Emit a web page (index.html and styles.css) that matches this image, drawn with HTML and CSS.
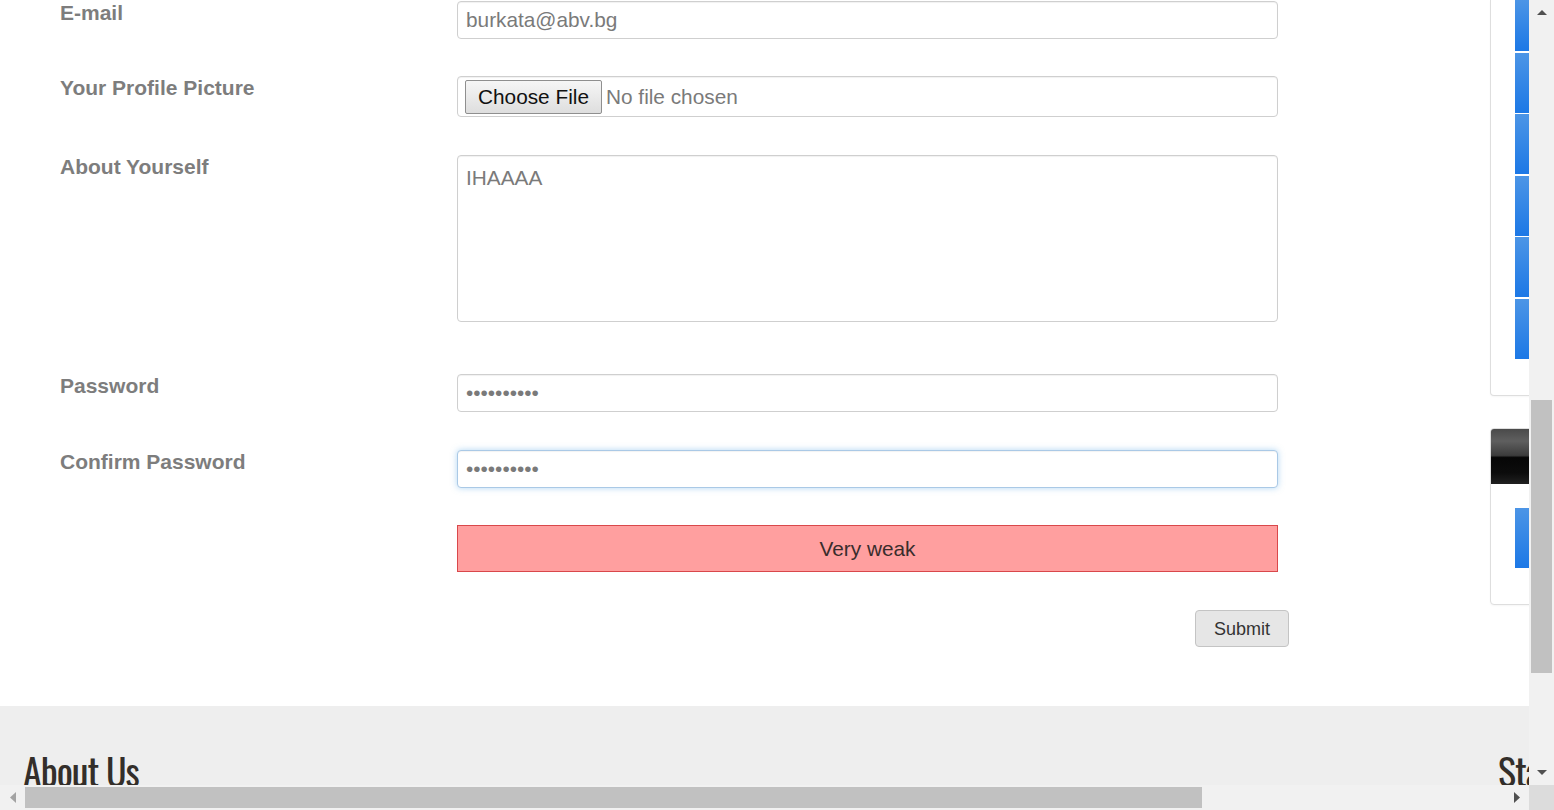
FILE: index.html
```html
<!DOCTYPE html>
<html lang="en">
<head>
<meta charset="utf-8">
<title>Profile</title>
<link rel="stylesheet" href="styles.css">
</head>
<body>
<div class="screen">
  <div class="viewport">
    <div class="page">
      <div class="main">
        <div class="content">
          <form class="form">
            <div class="row">
              <label class="label" for="email">E-mail</label>
              <input class="control" id="email" type="email" value="burkata@abv.bg">
            </div>
            <div class="row mb38">
              <label class="label" for="pic">Your Profile Picture</label>
              <input class="control file" id="pic" type="file">
            </div>
            <div class="row mb52">
              <label class="label" for="about">About Yourself</label>
              <textarea class="control area" id="about">IHAAAA</textarea>
            </div>
            <div class="row mb38">
              <label class="label" for="pass">Password</label>
              <input class="control" id="pass" type="password" value="abcdefghij">
            </div>
            <div class="row">
              <label class="label" for="pass2">Confirm Password</label>
              <input class="control focused" id="pass2" type="password" value="abcdefghij">
            </div>
            <div class="row mb38">
              <span></span>
              <div class="strength">Very weak</div>
            </div>
            <div class="row">
              <span></span>
              <div class="actions"><button type="button" class="btn">Submit</button></div>
            </div>
          </form>
        </div>
        <aside class="sidebar">
          <div class="card card-top">
            <div class="bars">
              <div class="bar bar-cut"></div>
              <div class="bar"></div>
              <div class="bar"></div>
              <div class="bar"></div>
              <div class="bar"></div>
              <div class="bar"></div>
            </div>
          </div>
          <div class="card card-two">
            <div class="card-head"></div>
            <div class="card-body">
              <div class="bar"></div>
            </div>
          </div>
        </aside>
      </div>
      <footer class="footer">
        <h2 class="foot-title">About Us</h2>
        <h2 class="foot-title">Stay Connected</h2>
      </footer>
    </div>
  </div>
  <div class="vscroll">
    <div class="sb-btn">
      <svg width="10" height="5" viewBox="0 0 10 5"><polygon points="0,5 10,5 5,0" fill="#505050"/></svg>
    </div>
    <div class="vtrack"><div class="vthumb"></div></div>
    <div class="sb-btn">
      <svg width="10" height="5" viewBox="0 0 10 5"><polygon points="0,0 10,0 5,5" fill="#505050"/></svg>
    </div>
  </div>
  <div class="hscroll">
    <div class="sb-btn">
      <svg width="6" height="11" viewBox="0 0 6 11"><polygon points="6,0 6,11 0,5.5" fill="#a3a3a3"/></svg>
    </div>
    <div class="htrack"><div class="hthumb"></div></div>
    <div class="sb-btn">
      <svg width="6" height="11" viewBox="0 0 6 11"><polygon points="0,0 0,11 6,5.5" fill="#505050"/></svg>
    </div>
  </div>
  <div class="corner"></div>
</div>
</body>
</html>
```

FILE: styles.css
```css
* { box-sizing: border-box; }

html, body {
  margin: 0;
  padding: 0;
  overflow: hidden;
  background: #fff;
  font-family: "Liberation Sans", Arial, sans-serif;
}

.screen {
  display: grid;
  grid-template-columns: 1529px 25px;
  grid-template-rows: 785px 25px;
  width: 1554px;
  height: 810px;
}

.viewport {
  overflow: hidden;
  background: #fff;
}

.page {
  width: 1920px;
}

.main {
  display: flex;
  height: 706px;
}

.content {
  width: 1490px;
  flex: none;
  padding-left: 60px;
  padding-top: 1px;
}

.form {
  display: flex;
  flex-direction: column;
  margin: 0;
}

.row {
  display: grid;
  grid-template-columns: 397px 821px;
  align-items: start;
  margin-bottom: 37px;
}

.mb38 { margin-bottom: 38px; }
.mb52 { margin-bottom: 52px; }

.label {
  font-weight: bold;
  font-size: 21px;
  line-height: 23px;
  color: #7d7d7d;
  padding-top: 0;
}

.control {
  display: block;
  width: 100%;
  height: 38px;
  margin: 0;
  padding: 0 8px;
  border: 1px solid #cfcfcf;
  border-radius: 4px;
  background: #fff;
  font-family: "Liberation Sans", Arial, sans-serif;
  font-size: 20.8px;
  color: #7a7a7a;
  box-shadow: inset 0 1px 1px rgba(0, 0, 0, 0.06);
  outline: none;
}

.file {
  height: 41px;
  padding: 3px 7px;
  line-height: normal;
}

.file::file-selector-button {
  font-family: "Liberation Sans", Arial, sans-serif;
  font-size: 20.8px;
  color: #111;
  padding: 4px 12px;
  margin: 0 4px 0 0;
  border: 1px solid #8f8f8f;
  border-radius: 2px;
  background: linear-gradient(#f6f6f6, #dedede);
  line-height: normal;
}

.area {
  height: 167px;
  padding: 7px 8px 6px;
  line-height: 1.42857;
  resize: none;
}

.focused {
  border-color: #aac9e6;
  box-shadow: inset 0 1px 1px rgba(0, 0, 0, 0.05), 0 0 6px rgba(102, 175, 233, 0.5);
}

.strength {
  height: 47px;
  border: 1px solid #d9484b;
  background: #ff9f9f;
  color: #3a2d2d;
  font-size: 20.8px;
  line-height: 45px;
  text-align: center;
}

.actions {
  display: flex;
  justify-content: flex-end;
  margin-right: -11px;
}

.btn {
  height: 37px;
  padding: 2px 18px 0;
  border: 1px solid #c4c4c4;
  border-radius: 4px;
  background: #e6e6e6;
  color: #333;
  font-family: "Liberation Sans", Arial, sans-serif;
  font-size: 18px;
  line-height: 33px;
}

/* sidebar */
.sidebar {
  width: 400px;
  flex: none;
}

.card {
  border: 1px solid #dedede;
  border-radius: 4px;
  background: #fff;
  box-shadow: 0 1px 2px rgba(0, 0, 0, 0.04);
}

.card-top {
  border-top: 0;
  border-radius: 0 0 4px 4px;
  padding: 0 0 36px 24px;
}

.bars {
  display: flex;
  flex-direction: column;
  gap: 1.6px;
}

.bar {
  width: 340px;
  height: 60px;
  background: linear-gradient(#4c95e6, #1c78e6);
}

.bar-cut {
  height: 51px;
}

.card-two {
  margin-top: 32px;
  overflow: hidden;
}

.card-head {
  height: 55px;
  background: linear-gradient(#4a4a4a 0%, #5f5f5f 22%, #3c3c3c 48%, #060606 52%, #0c0c0c 80%, #202020 100%);
}

.card-body {
  padding: 24px 0 36px 24px;
}

/* footer */
.footer {
  display: grid;
  grid-template-columns: 1475px 1fr;
  padding: 44px 0 0 23px;
  height: 200px;
  background: #eeeeee;
}

.foot-title {
  margin: 0;
  font-family: "Oswald", "Liberation Sans Narrow", "DejaVu Sans Condensed", sans-serif;
  font-weight: normal;
  font-size: 38px;
  line-height: 1.1;
  letter-spacing: -1px;
  color: #332e2a;
  white-space: nowrap;
}

/* fake scrollbars */
.vscroll {
  display: flex;
  flex-direction: column;
  background: #f1f1f1;
}

.hscroll {
  display: flex;
  background: #f1f1f1;
}

.sb-btn {
  flex: none;
  width: 25px;
  height: 25px;
  display: flex;
  align-items: center;
  justify-content: center;
}

.vtrack {
  flex: 1;
  padding: 375px 2px 0;
}

.vthumb {
  height: 273px;
  background: #c1c1c1;
}

.htrack {
  flex: 1;
  padding: 2px 0;
}

.hthumb {
  width: 1177px;
  height: 21px;
  background: #c1c1c1;
}

.corner {
  background: #dcdcdc;
}
```
